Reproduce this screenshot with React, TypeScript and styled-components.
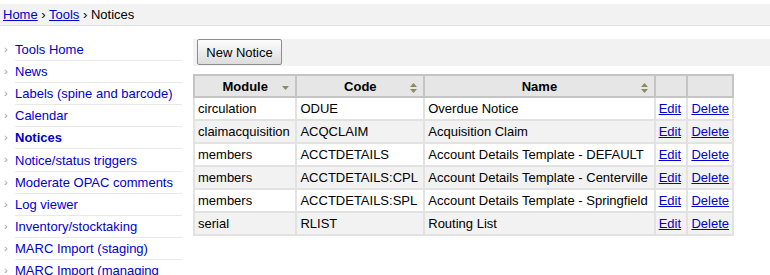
import styled, { createGlobalStyle } from "styled-components";

const GlobalStyle = createGlobalStyle`
  body {
    margin: 0;
    font-family: "Liberation Sans", Arial, sans-serif;
    font-size: 13px;
    color: #000;
    background: #fff;
  }
`;

const menu = [
  "Tools Home",
  "News",
  "Labels (spine and barcode)",
  "Calendar",
  "Notices",
  "Notice/status triggers",
  "Moderate OPAC comments",
  "Log viewer",
  "Inventory/stocktaking",
  "MARC Import (staging)",
  "MARC Import (managing",
];

const notices = [
  ["circulation", "ODUE", "Overdue Notice"],
  ["claimacquisition", "ACQCLAIM", "Acquisition Claim"],
  ["members", "ACCTDETAILS", "Account Details Template - DEFAULT"],
  ["members", "ACCTDETAILS:CPL", "Account Details Template - Centerville"],
  ["members", "ACCTDETAILS:SPL", "Account Details Template - Springfield"],
  ["serial", "RLIST", "Routing List"],
];

const SortIcon = ({ both }: { both?: boolean }) => (
  <SSort width="9" height="12" viewBox="0 0 9 12">
    {both && <polygon points="1,5 8,5 4.5,1" fill="#8c8c5a" />}
    <polygon points={both ? "1,7 8,7 4.5,11" : "1,4 8,4 4.5,8"} fill="#8c8c5a" />
  </SSort>
);

export default function App() {
  return (
    <>
      <GlobalStyle />
      <SBreadcrumbs>
        <SLink href="#">Home</SLink> › <SLink href="#">Tools</SLink> › Notices
      </SBreadcrumbs>
      <SLayout>
        <SMenu>
          {menu.map((m) => (
            <SMenuItem key={m}>
              <SBullet>›</SBullet>
              <SMenuLink href="#" $active={m === "Notices"}>
                {m}
              </SMenuLink>
            </SMenuItem>
          ))}
        </SMenu>
        <SMain>
          <SToolbar>
            <SButton>New Notice</SButton>
          </SToolbar>
          <STable>
            <thead>
              <tr>
                <STh style={{ width: 102 }}>
                  Module
                  <SortIcon />
                </STh>
                <STh style={{ width: 126 }}>
                  Code
                  <SortIcon both />
                </STh>
                <STh style={{ width: 231 }}>
                  Name
                  <SortIcon both />
                </STh>
                <STh style={{ width: 31 }} />
                <STh />
              </tr>
            </thead>
            <tbody>
              {notices.map((n, i) => (
                <STr key={n[1]} $odd={i % 2 === 1}>
                  <STd>{n[0]}</STd>
                  <STd>{n[1]}</STd>
                  <STd>{n[2]}</STd>
                  <STd>
                    <SLink href="#">Edit</SLink>
                  </STd>
                  <STd>
                    <SLink href="#">Delete</SLink>
                  </STd>
                </STr>
              ))}
            </tbody>
          </STable>
        </SMain>
      </SLayout>
    </>
  );
}

const SBreadcrumbs = styled.div`
  margin-top: 4px;
  height: 21px;
  line-height: 21px;
  padding: 0 3px;
  background: #f2f2f2;
  border-bottom: 1px solid #e2e2e2;
`;

const SLink = styled.a`
  color: #0000cc;
  text-decoration: underline;
`;

const SLayout = styled.div`
  display: flex;
  padding-top: 13px;
`;

const SMenu = styled.ul`
  list-style: none;
  margin: 0;
  padding: 0 0 0 4px;
  width: 178px;
  flex-shrink: 0;
`;

const SMenuItem = styled.li`
  display: flex;
  align-items: center;
  height: 21.1px;
  border-bottom: 1px solid #e8e8e8;
  margin-left: 11px;
  position: relative;
`;

const SBullet = styled.span`
  position: absolute;
  left: -11px;
  top: 4px;
  font-size: 11px;
  color: #999;
`;

const SMenuLink = styled.a<{ $active?: boolean }>`
  color: #0000cc;
  text-decoration: none;
  font-weight: ${(p) => (p.$active ? "bold" : "normal")};
`;

const SMain = styled.div`
  flex: 1;
  padding-left: 11px;
`;

const SToolbar = styled.div`
  background: #f2f2f2;
  height: 27px;
  display: flex;
  align-items: flex-start;
  padding-left: 4px;
`;

const SButton = styled.button`
  font-family: "Liberation Sans", Arial, sans-serif;
  font-size: 13px;
  height: 26px;
  width: 85px;
  border: 1px solid #8d8d8d;
  border-radius: 2px;
  background: linear-gradient(#fdfdfd, #dcdcdc);
  color: #000;
  padding: 0;
`;

const STable = styled.table`
  margin-top: 8px;
  border-collapse: collapse;
  width: 541px;
  border: 2px solid #dadada;
`;

const STh = styled.th`
  background: #e6e6e6;
  border: 2px solid #c4c4c4;
  height: 20px;
  padding: 0 4px;
  font-weight: bold;
  text-align: center;
  position: relative;
`;

const SSort = styled.svg`
  position: absolute;
  right: 5px;
  top: 6px;
`;

const STr = styled.tr<{ $odd?: boolean }>`
  background: ${(p) => (p.$odd ? "#f2f2f2" : "#fff")};
`;

const STd = styled.td`
  border: 2px solid #e2e2e2;
  height: 21px;
  padding: 0 3px;
  white-space: nowrap;
`;
